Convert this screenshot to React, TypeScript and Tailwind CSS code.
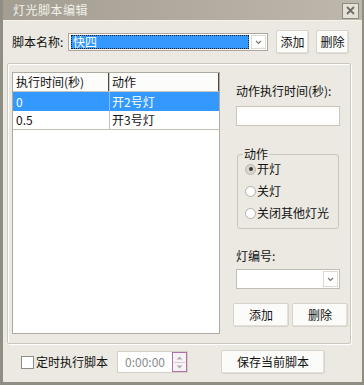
import React from "react";

const font = { fontFamily: '"Noto Sans CJK SC", "Noto Sans", sans-serif' };

function Chevron() {
  return (
    <svg width="7" height="5" viewBox="0 0 7 5">
      <path d="M1 1 L3.5 3.5 L6 1" fill="none" stroke="#7a776f" strokeWidth="1.2" />
    </svg>
  );
}

function Btn({ label, w }: { label: string; w: string }) {
  return (
    <div
      className={`${w} h-[24px] flex items-center justify-center bg-[#fbfbf9] border border-[#d6d3ca] rounded-[2px] text-[12px] leading-[14px] text-[#111] shadow-[inset_-1px_-1px_0_#e4e1d8]`}
    >
      {label}
    </div>
  );
}

function Radio({ checked, label }: { checked?: boolean; label: string }) {
  return (
    <div className="h-[22px] flex items-center">
      {checked ? (
        <div className="w-[11px] h-[11px] rounded-full bg-[#d9d6cd] border border-[#b9b6ad] flex items-center justify-center">
          <div className="w-[4px] h-[4px] rounded-full bg-[#3a3a3a]" />
        </div>
      ) : (
        <div className="w-[11px] h-[11px] rounded-full bg-white border border-[#b3b0a7]" />
      )}
      <span className="ml-[1px] text-[12px] leading-[14px] text-[#111]">{label}</span>
    </div>
  );
}

export default function App() {
  return (
    <div
      style={font}
      className="w-[364px] h-[385px] flex flex-col bg-[#ebe9e1] border-l-[3px] border-r-[2px] border-b-[3px] border-[#908d83] text-[#111] overflow-hidden"
    >
      {/* title bar */}
      <div className="h-[21px] flex items-center bg-gradient-to-r from-[#a39e91] to-[#bdb8ab] border-b border-[#f4f2ec]">
        <span className="ml-[10px] text-[12px] leading-[14px] text-[#f2f0ea] tracking-[0.5px]">灯光脚本编辑</span>
        <div className="ml-auto mr-[3px] mt-[1px] w-[17px] h-[16px] bg-[#e4e1d8] border border-[#8d8a80] flex items-center justify-center">
          <svg width="9" height="9" viewBox="0 0 9 9">
            <path d="M1 1 L8 8 M8 1 L1 8" stroke="#6f6c64" strokeWidth="1.8" />
          </svg>
        </div>
      </div>

      {/* top row */}
      <div className="mt-[9px] h-[24px] flex items-center">
        <span className="ml-[9px] w-[56px] text-[12px] leading-[14px]">脚本名称:</span>
        <div className="w-[200px] h-[18px] flex items-center bg-white border border-[#aaa79d]">
          <div className="ml-[2px] w-[178px] h-[14px] bg-[#3399ff] border border-dotted border-[#1a1a1a] flex items-center">
            <span className="ml-[1px] text-[12px] leading-[12px] text-white">快四</span>
          </div>
          <div className="ml-auto mr-[1px] w-[15px] h-[14px] bg-white border border-[#dcd9d0] flex items-center justify-center">
            <Chevron />
          </div>
        </div>
        <div className="ml-[8px]">
          <Btn label="添加" w="w-[33px]" />
        </div>
        <div className="ml-[7px]">
          <Btn label="删除" w="w-[33px]" />
        </div>
      </div>

      {/* main frame */}
      <div className="mt-[9px] ml-[4px] w-[344px] h-[281px] border border-[#cbc8bd] shadow-[1px_1px_0_#ffffff,inset_1px_1px_0_#ffffff] rounded-[2px] flex pt-[8px] pl-[4px]">
        {/* list */}
        <div className="w-[208px] h-[262px] bg-white border border-[#aeaba3] flex flex-col">
          <div className="h-[19px] flex bg-[#fcfcfa] border-b border-[#c8c5bc]">
            <div className="w-[96px] flex items-center border-r border-[#4a4a4a] shadow-[1px_0_0_#cfccc3]">
              <span className="ml-[3px] text-[12px] leading-[14px]">执行时间(秒)</span>
            </div>
            <div className="w-[110px] flex items-center border-r border-[#4a4a4a]">
              <span className="ml-[3px] text-[12px] leading-[14px]">动作</span>
            </div>
          </div>
          <div className="h-[19px] flex bg-[#3399ff] text-white">
            <div className="w-[96px] flex items-center">
              <span className="ml-[3px] text-[12px] leading-[14px]">0</span>
            </div>
            <div className="w-[110px] flex items-center border-l border-[#8dbff0]">
              <span className="ml-[2px] text-[12px] leading-[14px]">开2号灯</span>
            </div>
          </div>
          <div className="h-[19px] flex border-b border-[#c2bfb6]">
            <div className="w-[96px] flex items-center">
              <span className="ml-[3px] text-[12px] leading-[14px]">0.5</span>
            </div>
            <div className="w-[110px] flex items-center border-l border-[#c2bfb6]">
              <span className="ml-[2px] text-[12px] leading-[14px]">开3号灯</span>
            </div>
          </div>
        </div>

        {/* right column */}
        <div className="ml-[16px] w-[104px] flex flex-col">
          <span className="mt-[12px] h-[14px] text-[12px] leading-[14px]">动作执行时间(秒):</span>
          <div className="mt-[8px] h-[20px] bg-white border border-[#c9c6bc]" />
          <div className="relative mt-[28px] ml-[1px] w-[102px] h-[75px] border border-[#c9c6bb] rounded-[3px] pt-[3px] pl-[7px]">
            <span className="absolute top-[-8px] left-[5px] px-[1px] bg-[#ebe9e1] text-[12px] leading-[14px]">动作</span>
            <Radio checked label="开灯" />
            <Radio label="关灯" />
            <Radio label="关闭其他灯光" />
          </div>
          <span className="mt-[20px] h-[14px] text-[12px] leading-[14px]">灯编号:</span>
          <div className="mt-[6px] h-[20px] bg-white border border-[#c0bdb3] flex items-center">
            <div className="ml-auto mr-[1px] w-[15px] h-[16px] bg-white border border-[#dcd9d0] flex items-center justify-center">
              <Chevron />
            </div>
          </div>
          <div className="mt-[14px] -ml-[3px] w-[115px] flex gap-[3px]">
            <Btn label="添加" w="w-[56px]" />
            <Btn label="删除" w="w-[56px]" />
          </div>
        </div>
      </div>

      {/* bottom row */}
      <div className="mt-[6px] h-[24px] flex items-center">
        <div className="ml-[18px] w-[13px] h-[13px] bg-white border border-[#8e8c86]" />
        <span className="ml-[2px] w-[72px] text-[12px] leading-[14px]">定时执行脚本</span>
        <div className="ml-[9px] w-[71px] h-[22px] bg-white border border-[#d3d0c6] flex items-center">
          <span className="ml-[7px] text-[12px] leading-[14px] text-[#8a8a8a]">0:00:00</span>
          <div className="ml-auto mr-[0px] w-[15px] h-[20px] border border-[#b06fab] bg-[#f7f3f5] flex flex-col items-center justify-center gap-[2px]">
            <svg width="7" height="4" viewBox="0 0 7 4">
              <path d="M0.5 3.5 L3.5 0.5 L6.5 3.5 Z" fill="#b9a8b6" />
            </svg>
            <div className="w-[11px] h-px bg-[#d8c9d5]" />
            <svg width="7" height="4" viewBox="0 0 7 4">
              <path d="M0.5 0.5 L3.5 3.5 L6.5 0.5 Z" fill="#b9a8b6" />
            </svg>
          </div>
        </div>
        <div className="ml-[33px]">
          <Btn label="保存当前脚本" w="w-[104px]" />
        </div>
      </div>
    </div>
  );
}
